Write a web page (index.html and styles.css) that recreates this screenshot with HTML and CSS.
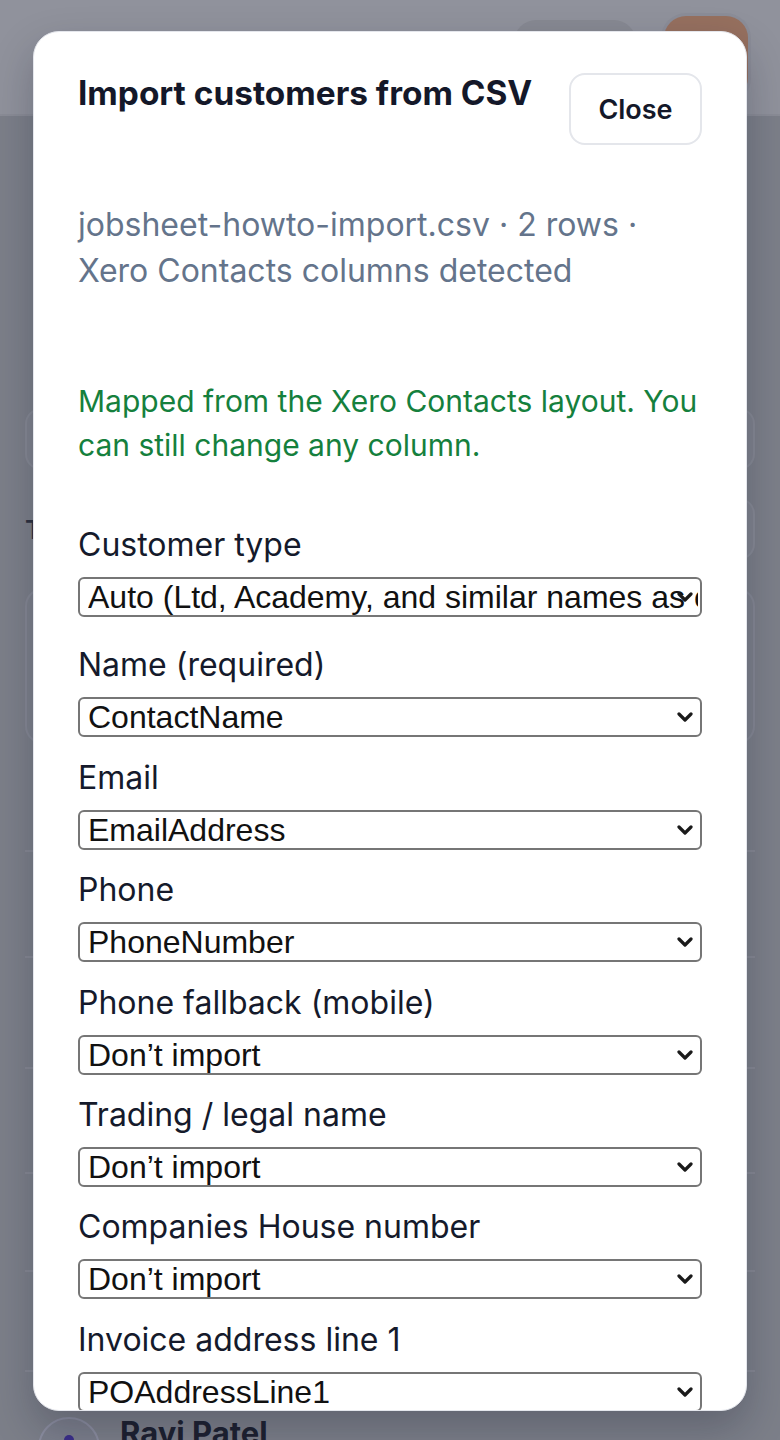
FILE: index.html
```html
<!DOCTYPE html>
<html lang="en">
<head>
<meta charset="utf-8">
<title>Import customers from CSV</title>
<link rel="stylesheet" href="styles.css">
</head>
<body>
<div class="page">
  <header class="topbar">
    <span class="pill"></span>
    <span class="avatar-box"></span>
  </header>
  <main class="content">
    <div class="search"></div>
    <div class="toolbar">
      <span class="toolbar-title">Tags</span>
      <span class="toolbar-btn"></span>
    </div>
    <div class="panel"></div>
    <ul class="list">
      <li class="row r1"></li>
      <li class="row r2"></li>
      <li class="row r3"></li>
      <li class="row r4"></li>
      <li class="row r5"></li>
      <li class="row r6"></li>
      <li class="row last">
        <span class="row-avatar"><span class="dot"></span></span>
        <span class="row-name">Ravi Patel</span>
      </li>
    </ul>
  </main>
</div>

<div class="modal" role="dialog" aria-labelledby="modal-title">
  <div class="modal-head">
    <h2 id="modal-title" class="modal-title">Import customers from CSV</h2>
    <button class="close-btn" type="button">Close</button>
  </div>
  <p class="meta">jobsheet-howto-import.csv · 2 rows · Xero Contacts columns detected</p>
  <p class="notice">Mapped from the Xero Contacts layout. You can still change any column.</p>

  <div class="fields">
    <div class="field first">
      <label class="field-label">Customer type</label>
      <div class="select-wrap">
        <select class="select"><option>Auto (Ltd, Academy, and similar names as companies)</option></select>
        <svg class="chev" viewBox="0 0 16 10" aria-hidden="true"><path d="M2 2l6 6 6-6"/></svg>
      </div>
    </div>
    <div class="field">
      <label class="field-label">Name (required)</label>
      <div class="select-wrap">
        <select class="select"><option>ContactName</option></select>
        <svg class="chev" viewBox="0 0 16 10" aria-hidden="true"><path d="M2 2l6 6 6-6"/></svg>
      </div>
    </div>
    <div class="field">
      <label class="field-label">Email</label>
      <div class="select-wrap">
        <select class="select"><option>EmailAddress</option></select>
        <svg class="chev" viewBox="0 0 16 10" aria-hidden="true"><path d="M2 2l6 6 6-6"/></svg>
      </div>
    </div>
    <div class="field">
      <label class="field-label">Phone</label>
      <div class="select-wrap">
        <select class="select"><option>PhoneNumber</option></select>
        <svg class="chev" viewBox="0 0 16 10" aria-hidden="true"><path d="M2 2l6 6 6-6"/></svg>
      </div>
    </div>
    <div class="field">
      <label class="field-label">Phone fallback (mobile)</label>
      <div class="select-wrap">
        <select class="select"><option>Don’t import</option></select>
        <svg class="chev" viewBox="0 0 16 10" aria-hidden="true"><path d="M2 2l6 6 6-6"/></svg>
      </div>
    </div>
    <div class="field">
      <label class="field-label">Trading / legal name</label>
      <div class="select-wrap">
        <select class="select"><option>Don’t import</option></select>
        <svg class="chev" viewBox="0 0 16 10" aria-hidden="true"><path d="M2 2l6 6 6-6"/></svg>
      </div>
    </div>
    <div class="field">
      <label class="field-label">Companies House number</label>
      <div class="select-wrap">
        <select class="select"><option>Don’t import</option></select>
        <svg class="chev" viewBox="0 0 16 10" aria-hidden="true"><path d="M2 2l6 6 6-6"/></svg>
      </div>
    </div>
    <div class="field">
      <label class="field-label">Invoice address line 1</label>
      <div class="select-wrap">
        <select class="select"><option>POAddressLine1</option></select>
        <svg class="chev" viewBox="0 0 16 10" aria-hidden="true"><path d="M2 2l6 6 6-6"/></svg>
      </div>
    </div>
  </div>
</div>
</body>
</html>
```

FILE: styles.css
```css
* { box-sizing: border-box; }

html, body {
  margin: 0;
  padding: 0;
}

body {
  width: 780px;
  height: 1440px;
  overflow: hidden;
  position: relative;
  background: #7c7f89;
  font-family: Inter, "Noto Sans", sans-serif;
}

/* ---------- dimmed page behind the dialog ---------- */
.page {
  height: 1440px;
  display: flex;
  flex-direction: column;
}

.topbar {
  height: 116px;
  flex: none;
  background: #90929c;
  border-bottom: 2px solid #8a8c96;
  display: flex;
  justify-content: flex-end;
  align-items: flex-start;
  gap: 28px;
  padding: 16px 32px 0 0;
}

.pill {
  width: 122px;
  height: 60px;
  margin-top: 4px;
  border-radius: 22px;
  background: #878992;
}

.avatar-box {
  width: 84px;
  height: 84px;
  border-radius: 22px;
  background: #96705f;
  box-shadow: 0 0 0 3px #8b8d98;
}

.content {
  flex: 1;
  padding: 292px 25px 0 25px;
  display: flex;
  flex-direction: column;
}

.search {
  height: 62px;
  flex: none;
  border-radius: 16px;
  background: #7f828d;
  border: 2px solid #868994;
}

.toolbar {
  height: 62px;
  flex: none;
  margin-top: 28px;
  display: flex;
  justify-content: space-between;
  align-items: center;
}

.toolbar-title {
  font-size: 26px;
  font-weight: 600;
  color: #2d3140;
}

.toolbar-btn {
  width: 120px;
  height: 62px;
  border-radius: 16px;
  background: #80838e;
  border: 2px solid #878a95;
}

.panel {
  height: 156px;
  flex: none;
  margin-top: 28px;
  border-radius: 18px;
  background: #7d808b;
  border: 2px solid #858894;
}

.list {
  list-style: none;
  margin: 0;
  padding: 0;
}

.row {
  border-bottom: 2px solid #868893;
}

.r1 { height: 108px; }
.r2 { height: 106px; }
.r3 { height: 111px; }
.r4 { height: 105px; }
.r5 { height: 98px; }
.r6 { height: 100px; }

.row.last {
  border-bottom: 0;
  display: flex;
  align-items: flex-start;
  gap: 20px;
  padding: 45px 0 0 13px;
}

.row-avatar {
  flex: none;
  width: 62px;
  height: 62px;
  border-radius: 50%;
  background: #7c7f8c;
  border: 2px solid #8c8ea0;
  display: flex;
  align-items: flex-start;
  justify-content: center;
  padding-top: 16px;
}

.dot {
  width: 10px;
  height: 10px;
  border-radius: 50%;
  background: #3b2f8a;
}

.row-name {
  font-size: 31px;
  font-weight: 700;
  color: #1d2130;
  line-height: 36px;
  margin-top: -2px;
}

/* ---------- dialog ---------- */
.modal {
  position: absolute;
  left: 33px;
  top: 31px;
  width: 714px;
  height: 1380px;
  background: #ffffff;
  border: 1px solid #e4e6ec;
  border-radius: 26px;
  box-shadow: 0 18px 40px rgba(15, 20, 40, 0.25);
  overflow: hidden;
  padding: 41px 44px 0 44px;
  color: #151a2b;
}

.modal-head {
  display: flex;
  justify-content: space-between;
  align-items: flex-start;
  gap: 16px;
}

.modal-title {
  margin: 0;
  font-size: 33.4px;
  line-height: 40px;
  font-weight: 700;
  color: #141829;
}

.close-btn {
  flex: none;
  width: 133px;
  height: 72px;
  border: 2px solid #e4e6eb;
  border-radius: 16px;
  background: #ffffff;
  font-family: Inter, "Noto Sans", sans-serif;
  font-size: 27px;
  font-weight: 600;
  color: #141829;
  padding: 0;
}

.meta {
  margin: 57px 0 0 0;
  font-size: 32px;
  line-height: 46px;
  color: #64748b;
}

.notice {
  margin: 85px 0 0 0;
  font-size: 30px;
  line-height: 44px;
  color: #15803d;
}

.fields {
  margin-top: 58px;
  display: flex;
  flex-direction: column;
  gap: 20.4px;
}

.field.first {
  margin-bottom: 8px;
}

.field-label {
  display: block;
  font-size: 32px;
  line-height: 40px;
  color: #151a2b;
  margin-bottom: 12px;
}

.select-wrap {
  position: relative;
}

.select {
  display: block;
  width: 100%;
  height: 40px;
  margin: 0;
  -webkit-appearance: none;
  appearance: none;
  border: 2px solid #767676;
  border-radius: 6px;
  background: #ffffff;
  font-family: "Liberation Sans", Arial, sans-serif;
  font-size: 32px;
  color: #111111;
  padding: 0 2px 0 8px;
  line-height: 36px;
}

.chev {
  position: absolute;
  right: 9px;
  top: 15px;
  width: 16px;
  height: 10px;
  fill: none;
  stroke: #1a1a1a;
  stroke-width: 3.2;
  stroke-linecap: round;
  stroke-linejoin: round;
  pointer-events: none;
}
```
